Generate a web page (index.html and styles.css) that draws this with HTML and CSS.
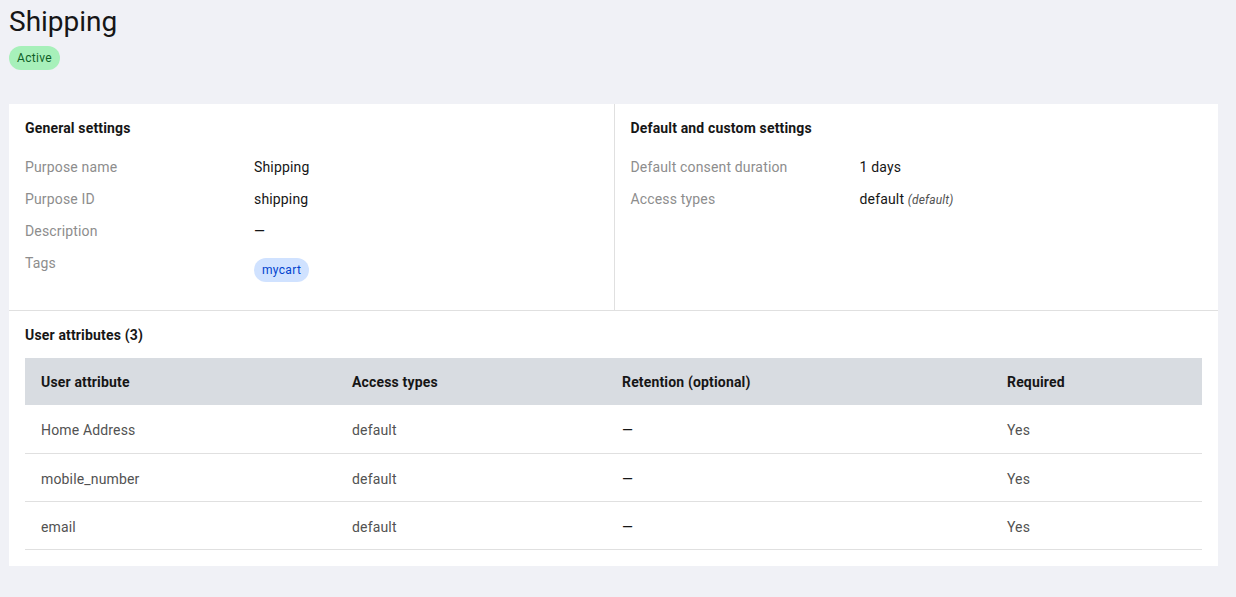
FILE: index.html
```html
<!DOCTYPE html>
<html lang="en">
<head>
<meta charset="utf-8">
<title>Shipping</title>
<link rel="stylesheet" href="styles.css">
</head>
<body>
<main class="page">
  <header class="page-header">
    <h1 class="page-title">Shipping</h1>
    <span class="tag tag-green">Active</span>
  </header>

  <section class="card">
    <div class="card-top">
      <div class="panel">
        <h2 class="panel-title">General settings</h2>
        <dl class="props">
          <div class="prop"><dt>Purpose name</dt><dd>Shipping</dd></div>
          <div class="prop"><dt>Purpose ID</dt><dd>shipping</dd></div>
          <div class="prop"><dt>Description</dt><dd>—</dd></div>
          <div class="prop prop-tags"><dt>Tags</dt><dd><span class="tag tag-blue">mycart</span></dd></div>
        </dl>
      </div>
      <div class="panel panel-right">
        <h2 class="panel-title">Default and custom settings</h2>
        <dl class="props">
          <div class="prop"><dt>Default consent duration</dt><dd>1 days</dd></div>
          <div class="prop"><dt>Access types</dt><dd>default <em class="note">(default)</em></dd></div>
        </dl>
      </div>
    </div>

    <div class="card-bottom">
      <h2 class="panel-title">User attributes (3)</h2>
      <table class="table">
        <colgroup>
          <col class="c1"><col class="c2"><col class="c3"><col class="c4">
        </colgroup>
        <thead>
          <tr><th>User attribute</th><th>Access types</th><th>Retention (optional)</th><th>Required</th></tr>
        </thead>
        <tbody>
          <tr><td>Home Address</td><td>default</td><td class="dash">—</td><td>Yes</td></tr>
          <tr><td>mobile_number</td><td>default</td><td class="dash">—</td><td>Yes</td></tr>
          <tr><td>email</td><td>default</td><td class="dash">—</td><td>Yes</td></tr>
        </tbody>
      </table>
    </div>
  </section>
</main>
</body>
</html>
```

FILE: styles.css
```css
* { box-sizing: border-box; }
html, body { margin: 0; padding: 0; }
body {
  background: #f0f1f6;
  font-family: "Roboto", "Inter", sans-serif;
  color: #161616;
  font-size: 14px;
  letter-spacing: 0.16px;
}
.page { padding: 0 18px 0 9px; }
.page-header { padding-top: 4px; height: 104px; }
.page-title {
  margin: 0;
  font-size: 28px;
  font-weight: 400;
  line-height: 36px;
  letter-spacing: 0;
  color: #161616;
}
.tag {
  display: inline-flex;
  align-items: center;
  height: 24px;
  padding: 0 8px;
  border-radius: 12px;
  font-size: 12px;
  letter-spacing: 0.32px;
}
.page-header .tag { margin-top: 6px; }
.tag-green { background: #a7f0ba; color: #0e6027; }
.tag-blue { background: #d0e2ff; color: #0043ce; }

.card { background: #fff; }
.card-top { display: grid; grid-template-columns: 1fr 1fr; border-bottom: 1px solid #e0e0e0; }
.panel { padding: 16px 16px 28px; }
.panel-right { border-left: 1px solid #e0e0e0; }
.panel-title {
  margin: 0 0 14px;
  font-size: 14px;
  font-weight: 700;
  line-height: 17px;
}
.props { margin: 0; }
.prop { display: grid; grid-template-columns: 229px 1fr; align-items: start; }
.prop dt { color: #8d8d8d; line-height: 32px; }
.prop dd { margin: 0; line-height: 32px; color: #161616; }
.prop-tags dd { padding-top: 11px; line-height: normal; }
.note { font-size: 12px; color: #525252; }

.card-bottom { padding: 16px 16px 16px; }
.table { width: 100%; border-collapse: collapse; table-layout: fixed; }
.c1 { width: 311px; }
.c2 { width: 270px; }
.c3 { width: 385px; }
.table th {
  background: #d8dce1;
  height: 47px;
  text-align: left;
  padding: 0 16px;
  font-weight: 700;
  color: #161616;
}
.table td {
  height: 48px;
  padding: 3px 16px 0;
  color: #525252;
  border-bottom: 1px solid #e0e0e0;
}
.table td.dash { color: #161616; }
```
